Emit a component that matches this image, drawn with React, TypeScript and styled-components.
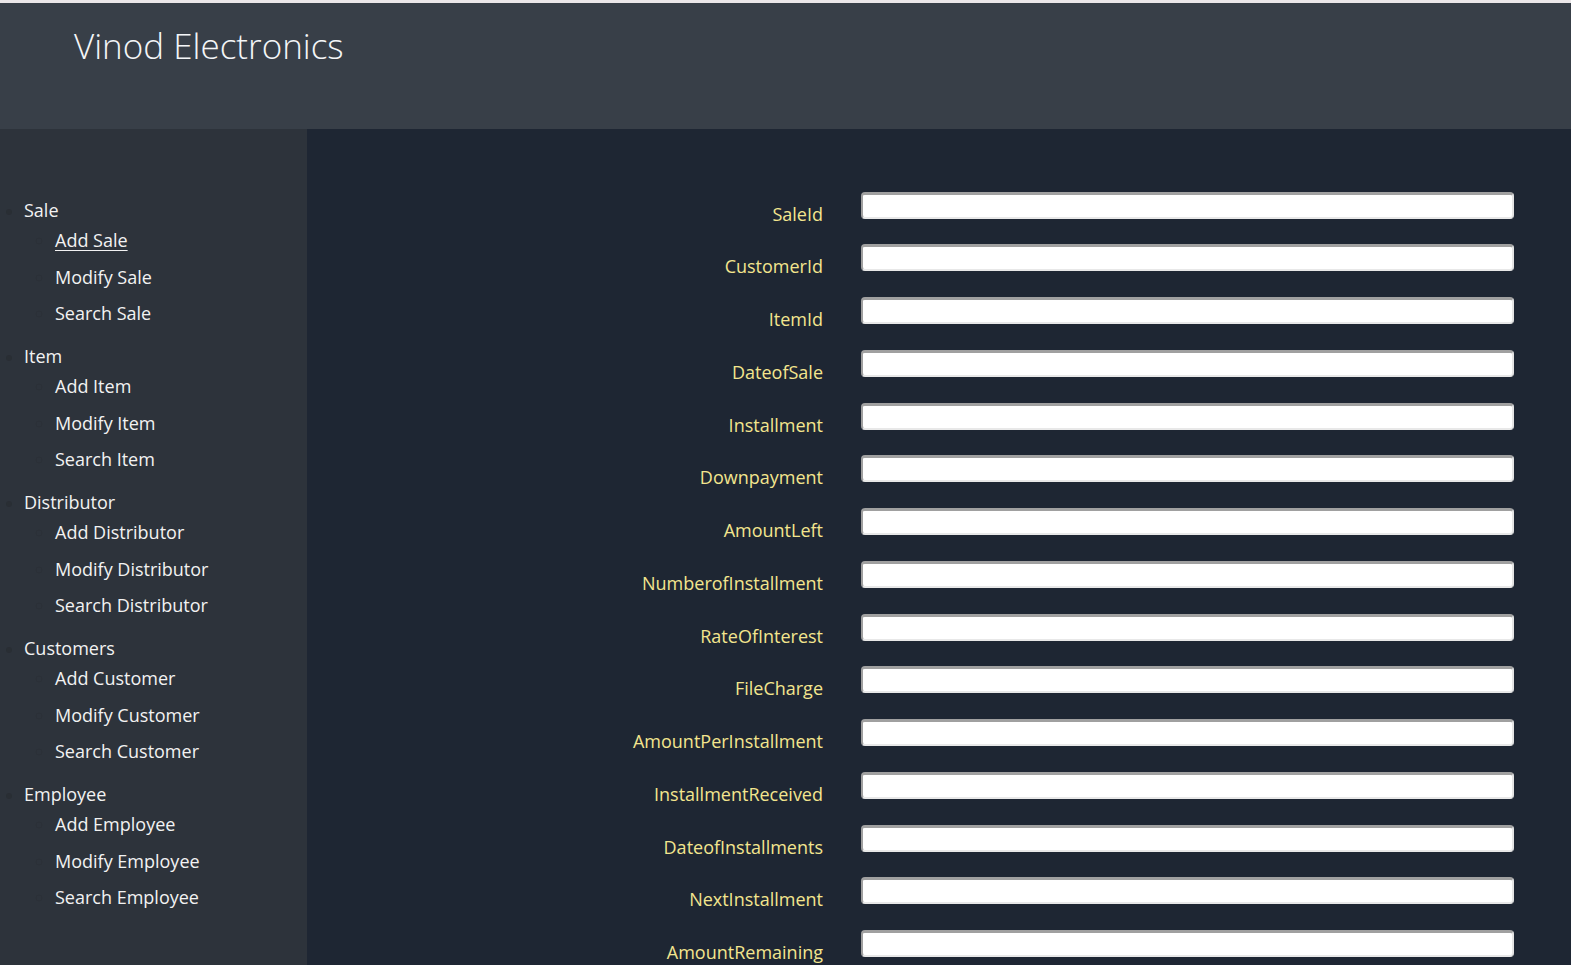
import React from "react";
import styled, { createGlobalStyle } from "styled-components";

const GlobalStyle = createGlobalStyle`
  html, body {
    margin: 0;
    padding: 0;
    overflow: hidden;
    background: #1e2633;
    font-family: "Open Sans", "Liberation Sans", sans-serif;
  }
`;

const menu = [
  { title: "Sale", items: ["Add Sale", "Modify Sale", "Search Sale"] },
  { title: "Item", items: ["Add Item", "Modify Item", "Search Item"] },
  {
    title: "Distributor",
    items: ["Add Distributor", "Modify Distributor", "Search Distributor"],
  },
  {
    title: "Customers",
    items: ["Add Customer", "Modify Customer", "Search Customer"],
  },
  {
    title: "Employee",
    items: ["Add Employee", "Modify Employee", "Search Employee"],
  },
];

const fields = [
  "SaleId",
  "CustomerId",
  "ItemId",
  "DateofSale",
  "Installment",
  "Downpayment",
  "AmountLeft",
  "NumberofInstallment",
  "RateOfInterest",
  "FileCharge",
  "AmountPerInstallment",
  "InstallmentReceived",
  "DateofInstallments",
  "NextInstallment",
  "AmountRemaining",
];

const App = () => {
  return (
    <>
      <GlobalStyle />
      <Page>
        <TopStrip />
        <Header>
          <Title>Vinod Electronics</Title>
        </Header>
        <Body>
          <Sidebar>
            <MenuList>
              {menu.map((section) => (
                <Section key={section.title}>
                  <SectionTitle>{section.title}</SectionTitle>
                  <SubList>
                    {section.items.map((item) => (
                      <SubItem key={item}>
                        <MenuLink href="#" $active={item === "Add Sale"}>
                          {item}
                        </MenuLink>
                      </SubItem>
                    ))}
                  </SubList>
                </Section>
              ))}
            </MenuList>
          </Sidebar>
          <Main>
            <Form>
              {fields.map((f) => (
                <React.Fragment key={f}>
                  <Label htmlFor={f}>{f}</Label>
                  <Input id={f} type="text" />
                </React.Fragment>
              ))}
            </Form>
          </Main>
        </Body>
      </Page>
    </>
  );
};

export default App;

const Page = styled.div`
  height: 965px;
  display: flex;
  flex-direction: column;
`;

const TopStrip = styled.div`
  height: 3px;
  background: #ebe7e9;
`;

const Header = styled.header`
  height: 125.5px;
  background: #383f48;
  padding-left: 74px;
  box-sizing: border-box;
`;

const Title = styled.h1`
  margin: 0;
  padding-top: 20px;
  font-weight: 300;
  font-size: 35px;
  line-height: 46px;
  color: #f4f6f8;
`;

const Body = styled.div`
  flex: 1;
  display: flex;
  min-height: 0;
`;

const Sidebar = styled.nav`
  width: 307px;
  flex-shrink: 0;
  background: #2d333b;
  padding-top: 70px;
  box-sizing: border-box;
`;

const MenuList = styled.ul`
  margin: 0;
  padding: 0 0 0 24px;
  list-style: disc;
  color: #292e34;
`;

const Section = styled.li`
  margin-bottom: 13px;
`;

const SectionTitle = styled.div`
  font-size: 18px;
  line-height: 23.5px;
  color: #f2f2f2;
`;

const SubList = styled.ul`
  margin: 0;
  padding: 0 0 0 31px;
  list-style: circle;
  color: #2b3037;
`;

const SubItem = styled.li`
  line-height: 36.5px;
  font-size: 18px;
`;

const MenuLink = styled.a<{ $active?: boolean }>`
  color: #f2f2f2;
  text-decoration: ${({ $active }) => ($active ? "underline" : "none")};
  text-underline-offset: 3px;
`;

const Main = styled.main`
  flex: 1;
  padding: 63px 57px 0 0;
  box-sizing: border-box;
  overflow: hidden;
`;

const Form = styled.form`
  display: grid;
  grid-template-columns: 1fr 653px;
  grid-auto-rows: 27px;
  column-gap: 38px;
  row-gap: 25.75px;
`;

const Label = styled.label`
  text-align: right;
  font-size: 18px;
  line-height: 27px;
  padding-top: 9px;
  color: #f3e58e;
`;

const Input = styled.input`
  box-sizing: border-box;
  height: 27px;
  width: 100%;
  margin: 0;
  background: #ffffff;
  border-style: solid;
  border-width: 3px 2px 2px 2px;
  border-color: #a0a0a0 #e4e4e4 #e8e8e8 #a0a0a0;
  border-radius: 4px;
  font-size: 16px;
  outline: none;
`;
